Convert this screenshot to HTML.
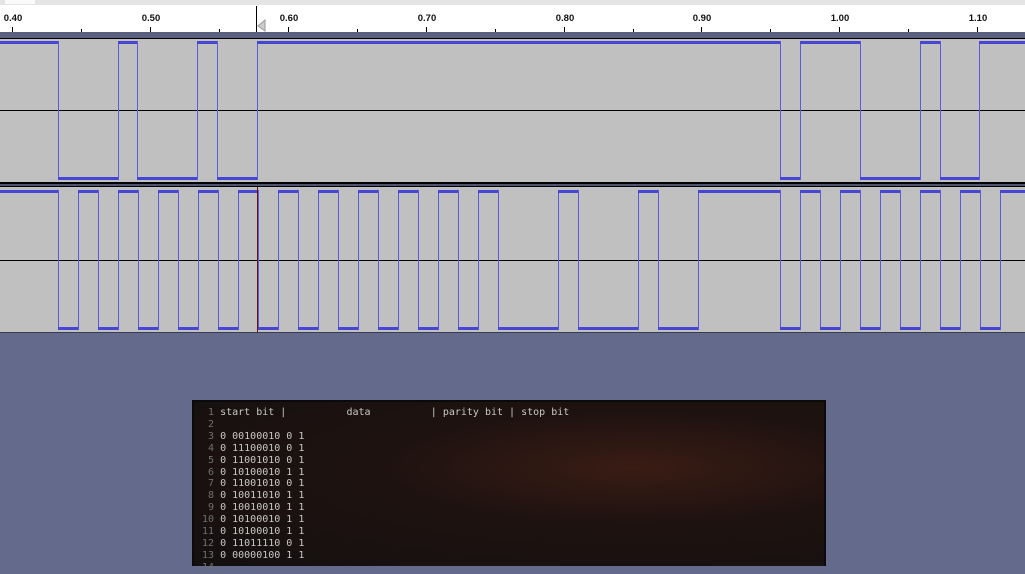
<!DOCTYPE html>
<html><head><meta charset="utf-8"><style>
html,body{margin:0;padding:0;width:1025px;height:564px;overflow:hidden;background:#646a8c;}
.term{position:absolute;left:192px;top:400px;width:630px;height:164px;background:radial-gradient(ellipse at 70% 40%,#3a1c14 0%,#1e1210 40%,#141010 100%);border:2px solid #0a0a0a;border-bottom:none;}
.term pre{margin:0;padding:5px 0 0 8px;font-family:"DejaVu Sans Mono","Liberation Mono",monospace;font-size:10px;line-height:11.9px;color:#c8c8c8;}
.n{color:#707070;}
</style></head><body>
<svg width="1025" height="335" style="position:absolute;left:0;top:0" xmlns="http://www.w3.org/2000/svg">
<rect x="0" y="0" width="1025" height="5" fill="#e4e4e4"/>
<rect x="5" y="0" width="30" height="4" fill="#fafafa"/>
<rect x="0" y="5" width="1025" height="27" fill="#ffffff"/>
<g font-family="Liberation Sans, sans-serif" font-size="9.5" font-weight="bold" fill="#111" text-anchor="middle">
<text x="13" y="21">0.40</text><text x="151" y="21">0.50</text><text x="289" y="21">0.60</text>
<text x="427" y="21">0.70</text><text x="565" y="21">0.80</text><text x="702" y="21">0.90</text>
<text x="840" y="21">1.00</text><text x="978" y="21">1.10</text></g>
<g stroke="#000" stroke-width="1">
<path d="M12.5 27V32M150.5 27V32M288.5 27V32M426.5 27V32M564.5 27V32M701.5 27V32M839.5 27V32M977.5 27V32"/>
<path d="M81.5 29V32M219.5 29V32M357.5 29V32M495.5 29V32M633.5 29V32M770.5 29V32M908.5 29V32"/>
<path d="M256.5 6V32"/></g>
<path d="M265 20L258 26L265 31Z" fill="#ccc" stroke="#999"/>
<rect x="0" y="32" width="1025" height="6" fill="#5c6180"/>
<rect x="0" y="38" width="1025" height="1" fill="#000"/>
<rect x="0" y="39" width="1025" height="143" fill="#c0c0c0"/>
<rect x="0" y="110" width="1025" height="1" fill="#000"/>
<rect x="0" y="182" width="1025" height="2" fill="#000"/>
<rect x="0" y="184" width="1025" height="2" fill="#4e536e"/>
<rect x="0" y="186" width="1025" height="1" fill="#000"/>
<rect x="0" y="187" width="1025" height="145" fill="#c0c0c0"/>
<rect x="0" y="260" width="1025" height="1" fill="#000"/>
<rect x="0" y="332" width="1025" height="1" fill="#3a3d50"/>
<g fill="none" stroke="#5a5ae0" stroke-width="1">
<polyline points="0,41.5 58.5,41.5 58.5,179.5 118.5,179.5 118.5,41.5 137.5,41.5 137.5,179.5 197.5,179.5 197.5,41.5 217.5,41.5 217.5,179.5 257.5,179.5 257.5,41.5 780.5,41.5 780.5,179.5 800.5,179.5 800.5,41.5 860.5,41.5 860.5,179.5 920.5,179.5 920.5,41.5 940.5,41.5 940.5,179.5 979.5,179.5 979.5,41.5 1025,41.5"/>
<polyline points="0,190.5 58.5,190.5 58.5,329.5 78.5,329.5 78.5,190.5 98.5,190.5 98.5,329.5 118.5,329.5 118.5,190.5 138.5,190.5 138.5,329.5 158.5,329.5 158.5,190.5 178.5,190.5 178.5,329.5 198.5,329.5 198.5,190.5 218.5,190.5 218.5,329.5 238.5,329.5 238.5,190.5 258.5,190.5 258.5,329.5 278.5,329.5 278.5,190.5 298.5,190.5 298.5,329.5 318.5,329.5 318.5,190.5 338.5,190.5 338.5,329.5 358.5,329.5 358.5,190.5 378.5,190.5 378.5,329.5 398.5,329.5 398.5,190.5 418.5,190.5 418.5,329.5 438.5,329.5 438.5,190.5 458.5,190.5 458.5,329.5 478.5,329.5 478.5,190.5 498.5,190.5 498.5,329.5 558.5,329.5 558.5,190.5 578.5,190.5 578.5,329.5 638.5,329.5 638.5,190.5 658.5,190.5 658.5,329.5 698.5,329.5 698.5,190.5 780.5,190.5 780.5,329.5 800.5,329.5 800.5,190.5 820.5,190.5 820.5,329.5 840.5,329.5 840.5,190.5 860.5,190.5 860.5,329.5 880.5,329.5 880.5,190.5 900.5,190.5 900.5,329.5 920.5,329.5 920.5,190.5 940.5,190.5 940.5,329.5 960.5,329.5 960.5,190.5 980.5,190.5 980.5,329.5 1000.5,329.5 1000.5,190.5 1025,190.5"/>
</g>
<g stroke="#4646d2" stroke-width="3">
<path d="M0 42.5H58M118 42.5H137M197 42.5H217M257 42.5H780M800 42.5H860M920 42.5H940M979 42.5H1025"/>
<path d="M58 178.5H118M137 178.5H197M217 178.5H257M780 178.5H800M860 178.5H920M940 178.5H979"/>
<path d="M0 191.5H58M78 191.5H98M118 191.5H138M158 191.5H178M198 191.5H218M238 191.5H258M278 191.5H298M318 191.5H338M358 191.5H378M398 191.5H418M438 191.5H458M478 191.5H498M558 191.5H578M638 191.5H658M698 191.5H780M800 191.5H820M840 191.5H860M880 191.5H900M920 191.5H940M960 191.5H980M1000 191.5H1025"/>
<path d="M58 328.5H78M98 328.5H118M138 328.5H158M178 328.5H198M218 328.5H238M258 328.5H278M298 328.5H318M338 328.5H358M378 328.5H398M418 328.5H438M458 328.5H478M498 328.5H558M578 328.5H638M658 328.5H698M780 328.5H800M820 328.5H840M860 328.5H880M900 328.5H920M940 328.5H960M980 328.5H1000"/>
</g>
<path d="M257.5 187V332" stroke="#6a1010" stroke-width="1"/>
</svg>
<div class="term"><pre><span class="n"> 1</span> start bit |          data          | parity bit | stop bit
<span class="n"> 2</span>
<span class="n"> 3</span> 0 00100010 0 1
<span class="n"> 4</span> 0 11100010 0 1
<span class="n"> 5</span> 0 11001010 0 1
<span class="n"> 6</span> 0 10100010 1 1
<span class="n"> 7</span> 0 11001010 0 1
<span class="n"> 8</span> 0 10011010 1 1
<span class="n"> 9</span> 0 10010010 1 1
<span class="n">10</span> 0 10100010 1 1
<span class="n">11</span> 0 10100010 1 1
<span class="n">12</span> 0 11011110 0 1
<span class="n">13</span> 0 00000100 1 1
<span class="n">14</span></pre></div>
</body></html>
